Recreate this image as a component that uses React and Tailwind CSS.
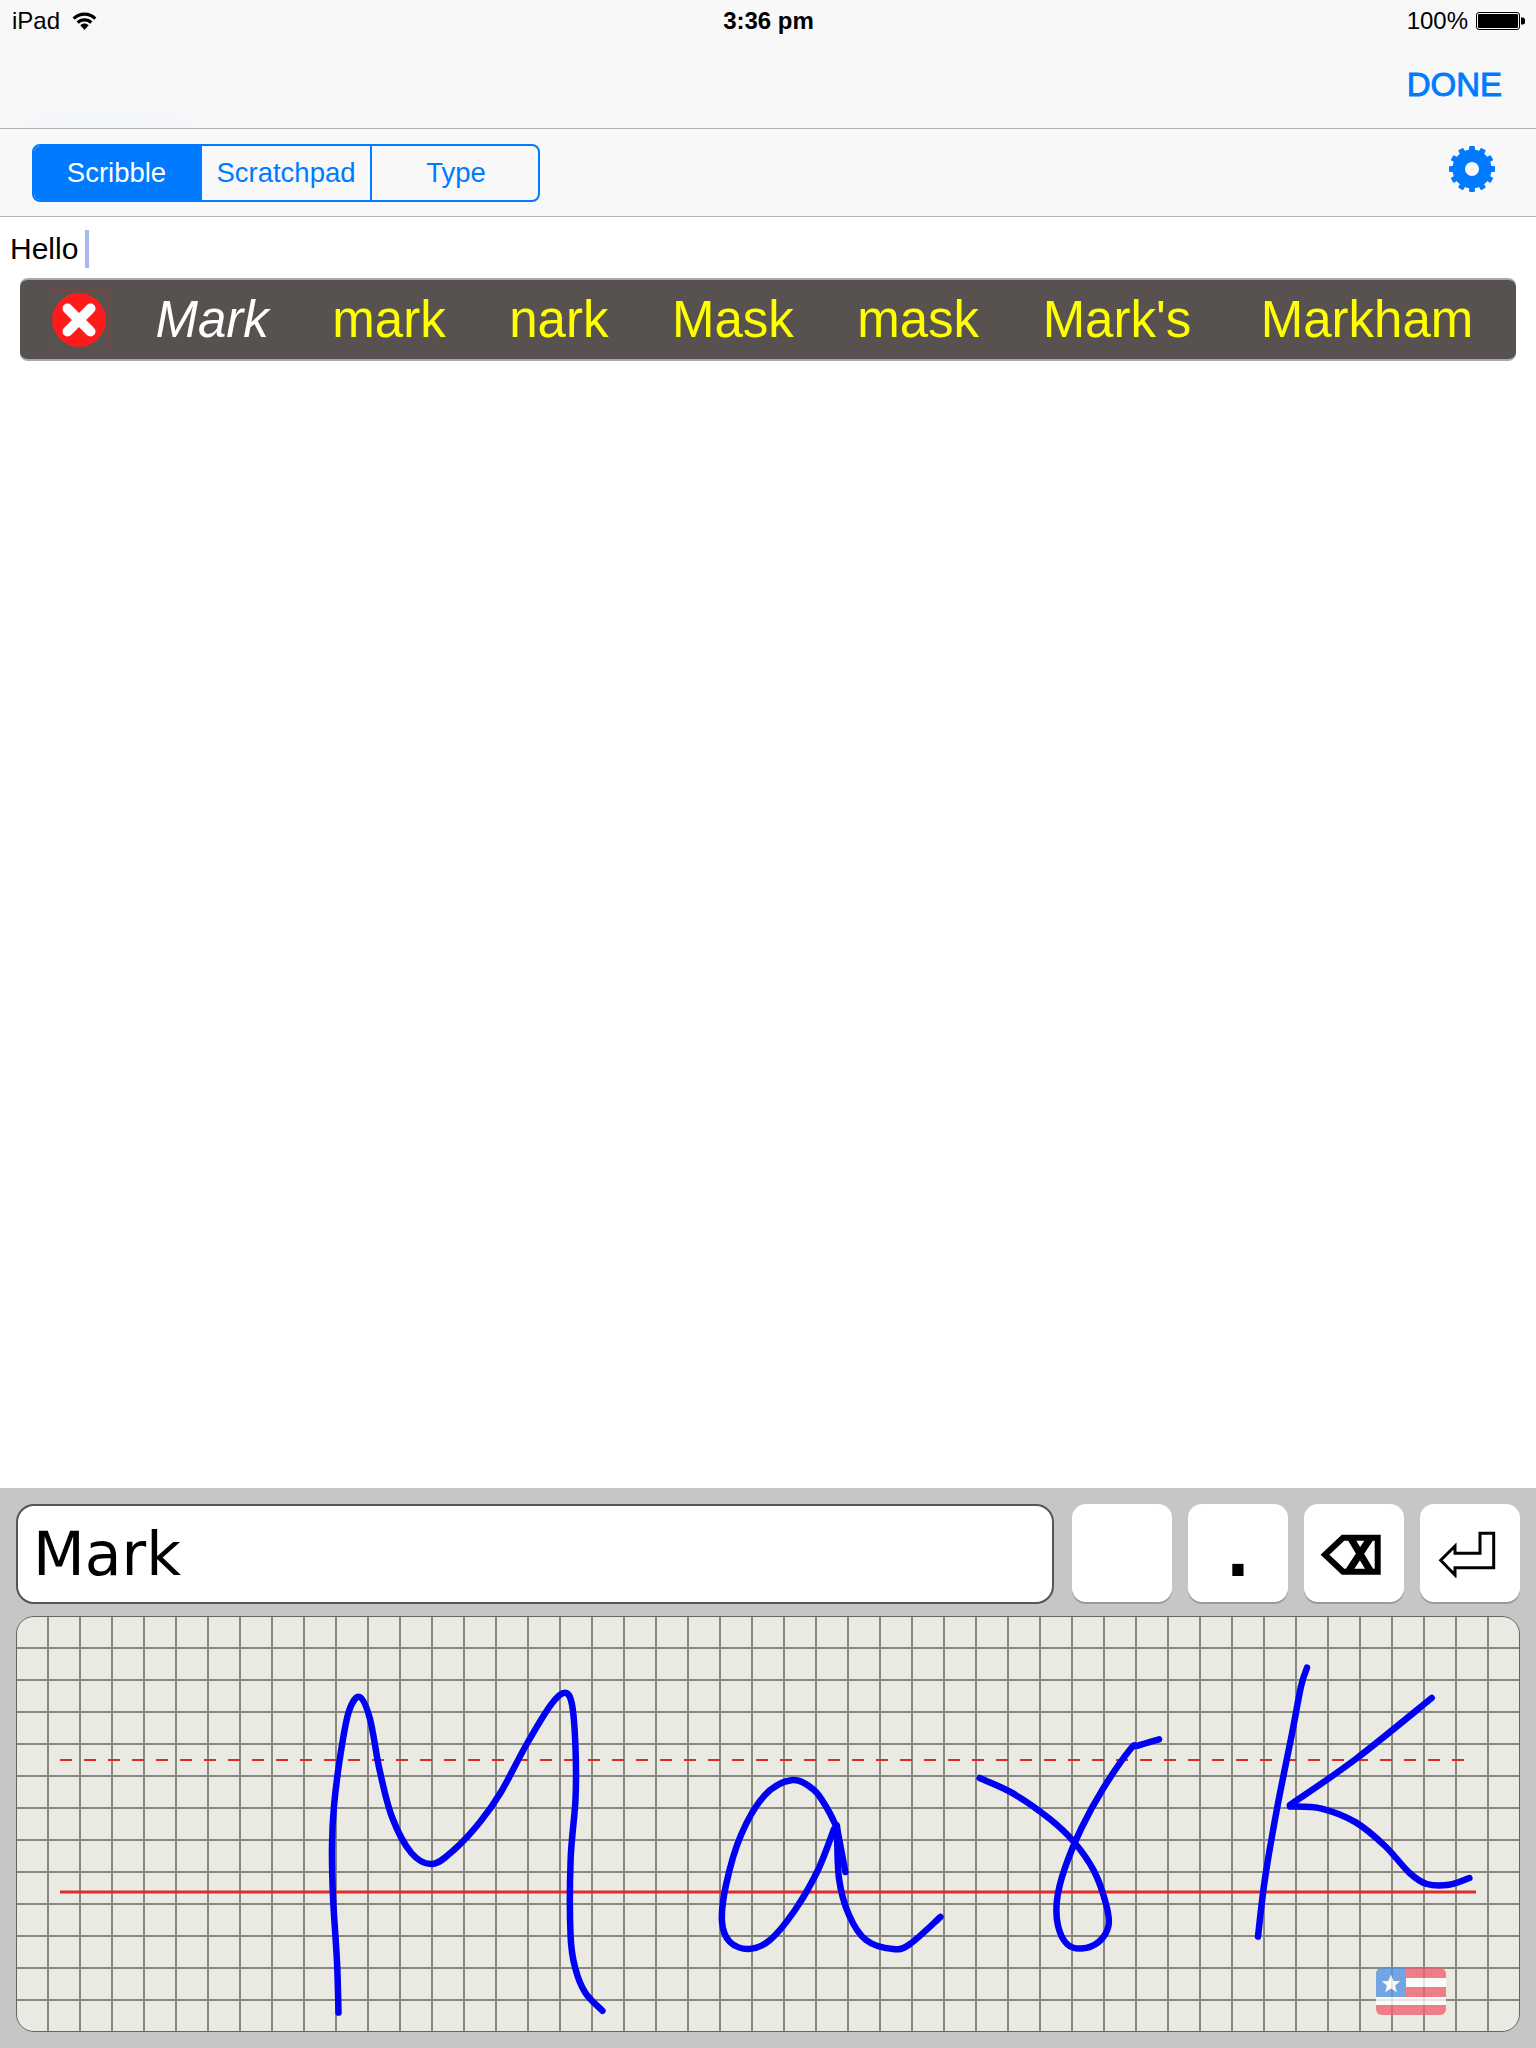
import React from 'react';

const WORDS = ['mark', 'nark', 'Mask', 'mask', "Mark's", 'Markham'];

// pen strokes of the handwriting, in page pixels
const STROKES = [
    [[338.5, 2012.6], [337, 1962], [333, 1896.7], [332, 1846], [334, 1806], [340.4, 1755], [348.7, 1712], [359.5, 1697], [370, 1719], [379.6, 1770], [392, 1817], [411.4, 1853], [432.5, 1864], [455, 1849], [480, 1822], [501, 1792], [526.5, 1744.5], [551, 1704.6], [564.7, 1692.7], [572, 1704.6], [575.5, 1748], [575.5, 1799], [570.6, 1860], [570.6, 1936.5], [575.5, 1969], [585.3, 1992.7], [602.4, 2010.8]],
    [[836, 1826], [828, 1810], [814, 1790], [792.5, 1780], [765, 1795], [741, 1835], [726, 1885], [722, 1922], [730, 1942], [749, 1949], [770, 1940], [795, 1910], [818, 1870], [834, 1829]],
    [[845.4, 1872], [836.5, 1825]],
    [[837, 1826], [839, 1878.5], [849, 1915], [866, 1940], [893, 1949], [910, 1944], [940.4, 1917]],
    [[979.6, 1778], [1013, 1793.4], [1049.6, 1818.8], [1074, 1842], [1094, 1871], [1106, 1904], [1108.5, 1925.6], [1098.6, 1942], [1081.5, 1948.5], [1067, 1944], [1058, 1925.6], [1057, 1900], [1064.4, 1869.5], [1081.5, 1828], [1103.5, 1788], [1130.5, 1749], [1138, 1745.6], [1159, 1739.4]],
    [[1307, 1667.7], [1301, 1686.5], [1292, 1733.6], [1277.5, 1806], [1265, 1878.5], [1258, 1936.5]],
    [[1431.7, 1698], [1355.8, 1759], [1290, 1805]],
    [[1290, 1806.5], [1321.5, 1808.6], [1355.8, 1822.4], [1385, 1846], [1409.6, 1873], [1426.8, 1884], [1449, 1884.7], [1469.4, 1878]],
];

// catmull-rom through the points
const smoothPath = (pts) => {
    let d = `M${pts[0][0]} ${pts[0][1]}`;
    for (let i = 0; i < pts.length - 1; i++) {
        const p0 = pts[i - 1] || pts[i];
        const p1 = pts[i];
        const p2 = pts[i + 1];
        const p3 = pts[i + 2] || p2;
        const c1x = p1[0] + (p2[0] - p0[0]) / 6;
        const c1y = p1[1] + (p2[1] - p0[1]) / 6;
        const c2x = p2[0] - (p3[0] - p1[0]) / 6;
        const c2y = p2[1] - (p3[1] - p1[1]) / 6;
        d += ` C${c1x} ${c1y} ${c2x} ${c2y} ${p2[0]} ${p2[1]}`;
    }
    return d;
};

const Wifi = () => (
    <svg width="25" height="18" viewBox="0 0 24 18" className="ml-[12px]">
        <path d="M1.2 6.6C7.5 0.6 16.5 0.6 22.8 6.6" fill="none" stroke="#000" strokeWidth="3.2" />
        <path d="M5.2 10.6C9 7 15 7 18.8 10.6" fill="none" stroke="#000" strokeWidth="3.2" />
        <path d="M7.8 13.2C10.3 11 13.7 11 16.2 13.2L12 18Z" fill="#000" />
    </svg>
);

const Battery = () => (
    <svg width="49" height="18" viewBox="0 0 49 18">
        <rect x="0.5" y="0.5" width="43" height="17" rx="2.5" fill="none" stroke="#000" />
        <rect x="2" y="2" width="40" height="14" rx="1" fill="#000" />
        <path d="M45 5.5h1.5a2.5 2.5 0 0 1 2.5 2.5v2a2.5 2.5 0 0 1-2.5 2.5H45Z" fill="#000" />
    </svg>
);

const Gear = () => (
    <svg width="46" height="46" viewBox="-23 -23 46 46">
        <circle r="13.25" fill="none" stroke="#007aff" strokeWidth="12.5" />
        {[0, 30, 60, 90, 120, 150, 180, 210, 240, 270, 300, 330].map((deg) => (
            <rect key={deg} x="-2.9" y="-23" width="5.8" height="6" rx="1" fill="#007aff" transform={`rotate(${deg})`} />
        ))}
    </svg>
);

const CloseIcon = () => (
    <svg width="60" height="60" viewBox="-30 -30 60 60" className="shrink-0">
        <rect x="-29.5" y="-29.5" width="59" height="59" fill="none" stroke="#e01e1e" strokeOpacity="0.3" />
        <circle r="27" fill="#fc1c1c" />
        <path d="M-11.5 -11.5L11.5 11.5M11.5 -11.5L-11.5 11.5" stroke="#fff" strokeWidth="10" strokeLinecap="round" />
    </svg>
);

const Backspace = () => (
    <svg width="62" height="42" viewBox="1320 1534 62 42">
        <path d="M1325 1554.7L1343 1537.7H1377.7V1571.7H1343Z" fill="none" stroke="#000" strokeWidth="6" />
        <path d="M1350 1537L1371 1572M1371 1537L1348 1572" fill="none" stroke="#000" strokeWidth="7" />
    </svg>
);

const ReturnIcon = () => (
    <svg width="58" height="48" viewBox="1438 1530 58 48">
        <path d="M1440.7 1560.3L1455 1546V1553.3H1480V1533.3H1493.7V1567.7H1455V1575Z" fill="none" stroke="#000" strokeWidth="3" />
    </svg>
);

const FlagIcon = () => (
    <svg x="1376" y="1968" width="70" height="47" viewBox="0 0 70 47" opacity="0.78">
        <rect width="70" height="47" rx="6" fill="#ef5e6e" />
        <rect y="10" width="70" height="9" fill="#fff" />
        <rect y="29" width="70" height="8" fill="#fff" />
        <path d="M6 0H30V29H0V6A6 6 0 0 1 6 0Z" fill="#5091e0" />
        <path d="M15 6.5l2.6 6.4 6.6.4-5.1 4.3 1.7 6.6-5.8-3.7-5.8 3.7 1.7-6.6-5.1-4.3 6.6-.4Z" fill="#fff" />
    </svg>
);

const App = () => {
    return (
        <div className="h-[2048px] flex flex-col bg-white text-black font-['Liberation_Sans',sans-serif]">
            <div className="h-[129px] shrink-0 flex flex-col border-b border-[#b2b2b2] bg-[#f8f8f8] bg-[radial-gradient(ellipse_130px_30px_at_110px_128px,#f2f5fc,transparent)]">
                <div className="h-[42px] flex items-center pl-[12px] pr-[11px] text-[24px]">
                    <div className="flex-1 flex items-center">
                        <span>iPad</span>
                        <Wifi />
                    </div>
                    <span className="font-bold">3:36 pm</span>
                    <div className="flex-1 flex items-center justify-end gap-[8px]">
                        <span>100%</span>
                        <Battery />
                    </div>
                </div>
                <div className="flex-1 flex items-center justify-end pr-[34px]">
                    <span className="text-[33px] text-[#007aff] [-webkit-text-stroke:0.9px_#007aff]">DONE</span>
                </div>
            </div>

            <div className="h-[88px] shrink-0 flex items-start justify-between pl-[32px] pr-[41px] pt-[15px] border-b border-[#b2b2b2] bg-[#f8f8f8]">
                <div className="w-[508px] h-[58px] grid grid-cols-3 border-2 border-[#007aff] rounded-[8px] overflow-hidden text-[27.5px] text-[#007aff]">
                    <div className="flex items-center justify-center pr-[3px] bg-[#007aff] text-white">Scribble</div>
                    <div className="flex items-center justify-center">Scratchpad</div>
                    <div className="flex items-center justify-center pl-[2px] border-l-2 border-[#007aff]">Type</div>
                </div>
                <div className="mt-[2px]">
                    <Gear />
                </div>
            </div>

            <div className="h-[61px] shrink-0 flex items-center pt-[2px] pl-[10px] text-[30px]">
                <span>Hello</span>
                <span className="w-[4px] h-[38px] ml-[7px] bg-[#a9b8f0]" />
            </div>

            <div className="mx-[20px] h-[83px] shrink-0 flex items-center gap-[63.5px] pl-[29px] rounded-[8px] bg-[#57524f] border-t-2 border-b-2 border-t-[#a8a8a8] border-b-[#a8a8a8] text-[51px] text-[#ffff00]">
                <CloseIcon />
                <span className="italic text-white -ml-[17px] mt-[2px]">Mark</span>
                {WORDS.map((word) => (
                    <span key={word} className="mt-[2px] last:ml-[6px]">{word}</span>
                ))}
            </div>

            <div className="flex-1" />

            <div className="h-[560px] shrink-0 flex flex-col gap-[12px] px-[16px] pt-[16px] bg-[#c6c6c6]">
                <div className="h-[100px] shrink-0 flex items-start gap-[16px]">
                    <div className="flex-1 h-[100px] mr-[2px] flex items-center pl-[15px] rounded-[18px] border-2 border-[#555555] bg-white text-[60px] font-['DejaVu_Sans',sans-serif]">
                        Mark
                    </div>
                    <div className="w-[100px] h-[98px] rounded-[14px] bg-white shadow-[0_2px_0_#9a9a9a]" />
                    <div className="w-[100px] h-[98px] rounded-[14px] bg-white shadow-[0_2px_0_#9a9a9a] flex justify-center items-end pb-[16px] text-[64px] font-bold leading-none font-['DejaVu_Sans',sans-serif]">
                        .
                    </div>
                    <div className="w-[100px] h-[98px] rounded-[14px] bg-white shadow-[0_2px_0_#9a9a9a] flex items-center justify-center pt-[4px] pr-[6px]">
                        <Backspace />
                    </div>
                    <div className="w-[100px] h-[98px] rounded-[14px] bg-white shadow-[0_2px_0_#9a9a9a] flex items-center justify-center pt-[2px] pr-[6px]">
                        <ReturnIcon />
                    </div>
                </div>

                <div className="relative h-[416px] shrink-0 rounded-[18px] border border-[#666660] overflow-hidden bg-[#eaeae2] bg-[linear-gradient(to_right,#8a8a82_2px,transparent_2px),linear-gradient(to_bottom,#8a8a82_2px,transparent_2px)] bg-[size:32px_32px] bg-[position:30px_30px]">
                    <svg viewBox="16 1616 1504 416" className="absolute -left-px -top-px w-[1504px] h-[416px]">
                        <path d="M60 1760H1465" stroke="#e02a2a" strokeWidth="2" strokeDasharray="12 12" />
                        <path d="M60 1892H1476" stroke="#e42c2c" strokeWidth="3" />
                        <FlagIcon />
                        {STROKES.map((pts, i) => (
                            <path key={i} d={smoothPath(pts)} fill="none" stroke="#0000f5" strokeWidth="6.5" strokeLinecap="round" strokeLinejoin="round" />
                        ))}
                    </svg>
                </div>
            </div>
        </div>
    );
};

export default App;
